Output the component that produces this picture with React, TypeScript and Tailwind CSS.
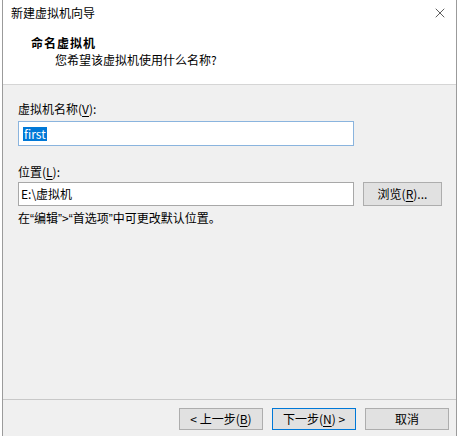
import { X } from "lucide-react"

const font = "font-['Microsoft_YaHei_UI','Noto_Sans_CJK_SC',sans-serif]"

function U({ children }: { children: string }) {
  return <span className="underline underline-offset-2">{children}</span>
}

// 半角弯引号
function Q({ children }: { children: string }) {
  return <span className="font-['Liberation_Sans',sans-serif]">{children}</span>
}

function WinButton({ children, primary }: { children: React.ReactNode; primary?: boolean }) {
  return (
    <button
      className={
        primary
          ? "w-[84px] h-[22px] border border-[#0078d7] bg-[#e1e1e1] text-[12px] leading-none text-black"
          : "w-[84px] h-[22px] border border-[#adadad] bg-[#e1e1e1] text-[12px] leading-none text-black"
      }
    >
      {children}
    </button>
  )
}

export default function App() {
  return (
    <div className={`w-[460px] h-[436px] bg-white flex ${font} text-[12px] text-black`}>
      <div className="ml-[2px] w-[455px] h-full flex flex-col border-l border-r border-[#9b9b9b]">
        {/* 标题栏 */}
        <div className="h-[26px] bg-white flex items-center justify-between pl-[8px] pr-[8px]">
          <span className="leading-[16px]">新建虚拟机向导</span>
          <X className="w-[16px] h-[16px] text-[#222]" strokeWidth={1.1} />
        </div>

        {/* 头部 */}
        <div className="h-[59px] bg-white border-b border-[#d5d5d5] pt-[8px] pl-[28px]">
          <div className="font-bold leading-[17px] tracking-[1px]">命名虚拟机</div>
          <div className="leading-[17px] pl-[24px]">您希望该虚拟机使用什么名称?</div>
        </div>

        {/* 内容 */}
        <div className="flex-1 bg-[#f0f0f0] border-b border-[#c8c8c8] pt-[16px] pl-[15px]">
          <div className="leading-[16px]">
            虚拟机名称(<U>V</U>):
          </div>
          <div className="mt-[4px] w-[336px] h-[25px] bg-white border border-[#8ab4de] flex items-center pl-[4px]">
            <span className="bg-[#0078d7] text-white leading-[14px] px-[1px]">first</span>
          </div>

          <div className="mt-[18px] leading-[16px]">
            位置(<U>L</U>):
          </div>
          <div className="mt-[2px] flex items-center gap-[9px]">
            <div className="w-[336px] h-[24px] bg-white border border-[#a8a8a8] flex items-center pl-[2px]">
              <span className="leading-[14px]">E:\虚拟机</span>
            </div>
            <button className="w-[79px] h-[24px] border border-[#adadad] bg-[#e1e1e1] text-[12px] leading-none">
              浏览(<U>R</U>)...
            </button>
          </div>

          <div className="mt-[4px] leading-[16px]">
            在<Q>“</Q>编辑<Q>”</Q>&gt;<Q>“</Q>首选项<Q>”</Q>中可更改默认位置。
          </div>
        </div>

        {/* 底部按钮 */}
        <div className="h-[36px] bg-[#f0f0f0] flex items-start justify-end gap-[9px] pt-[8px] pr-[7px]">
          <WinButton>
            &lt; 上一步(<U>B</U>)
          </WinButton>
          <WinButton primary>
            下一步(<U>N</U>) &gt;
          </WinButton>
          <WinButton>取消</WinButton>
        </div>
      </div>
    </div>
  )
}
